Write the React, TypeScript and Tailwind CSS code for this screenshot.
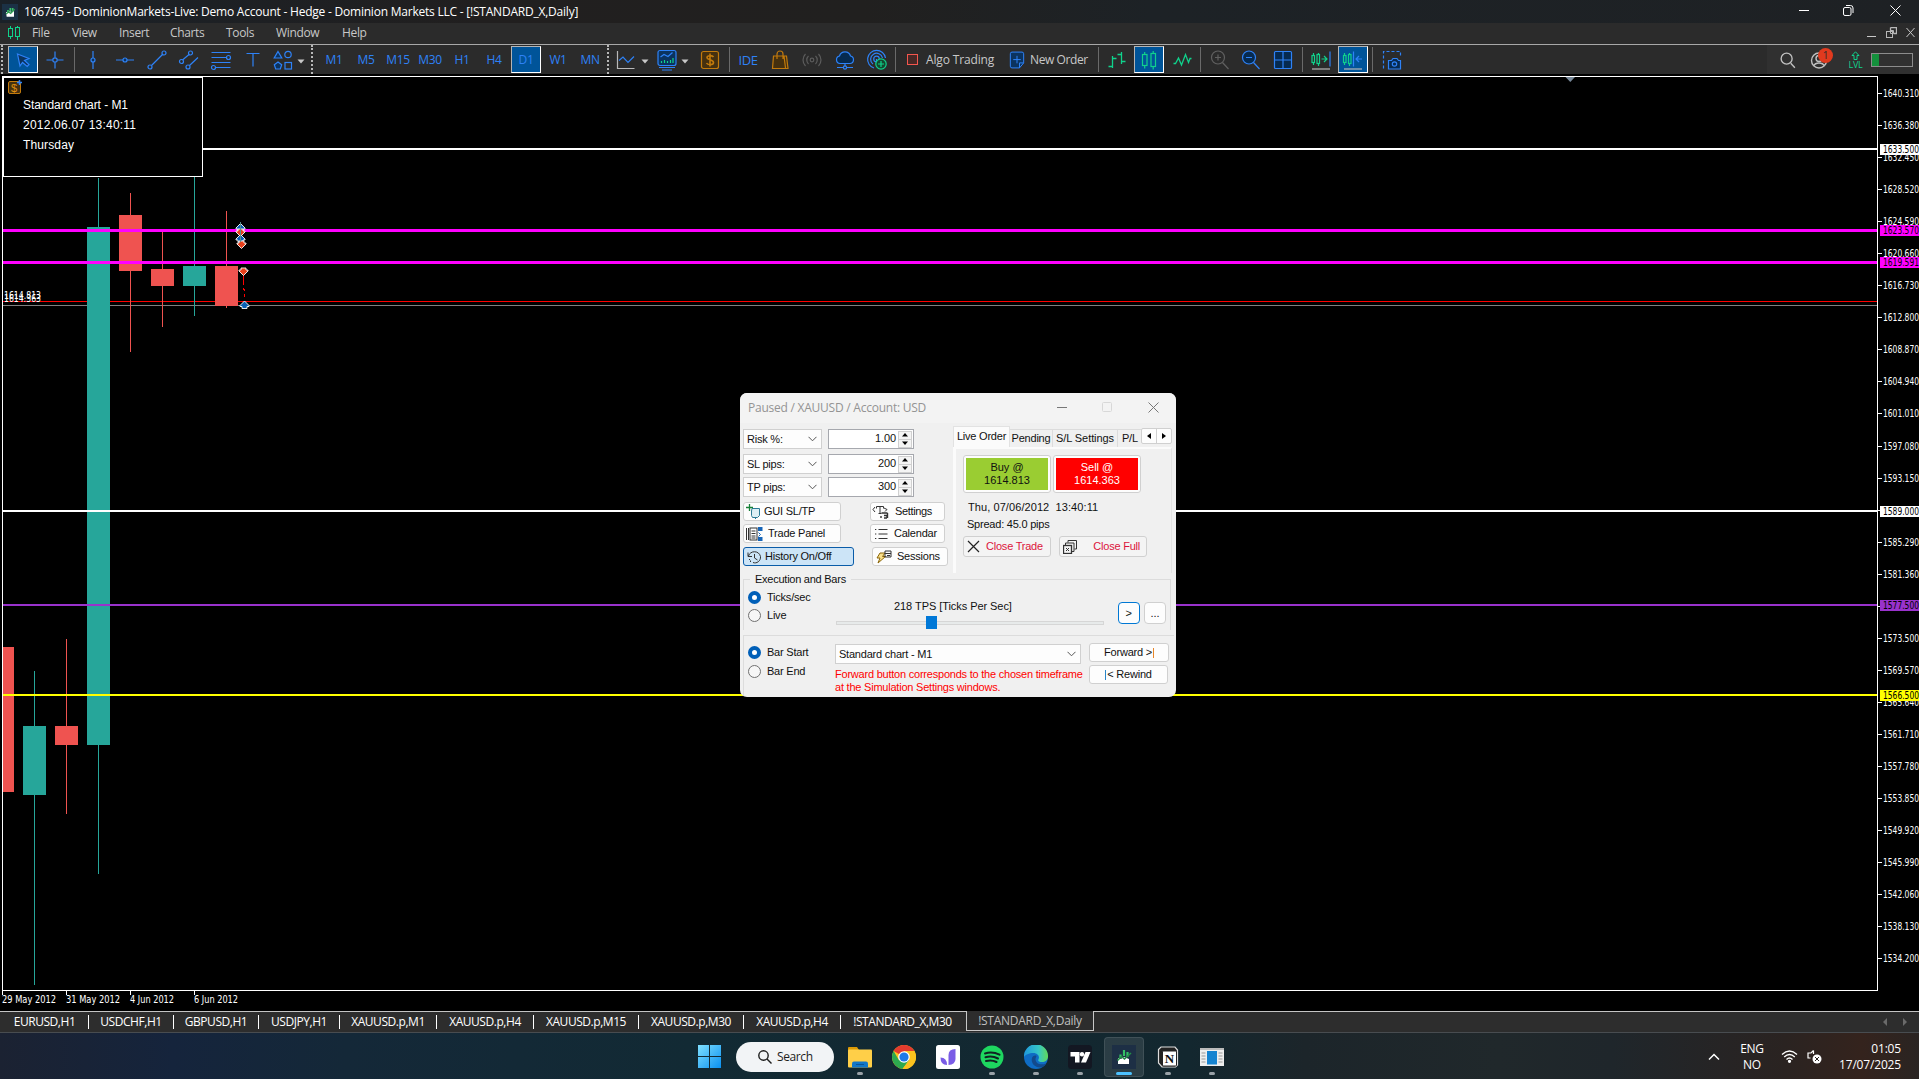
import React from 'react';
import clsx from 'clsx';

const BLUE = '#2e82f7';
const GREEN = '#10d28c';

const menus = [
  { label: 'File', width: 'w-[40px]' },
  { label: 'View', width: 'w-[47px]' },
  { label: 'Insert', width: 'w-[51px]' },
  { label: 'Charts', width: 'w-[56px]' },
  { label: 'Tools', width: 'w-[50px]' },
  { label: 'Window', width: 'w-[66px]' },
  { label: 'Help', width: 'w-[50px]' },
];

const timeframes = ['M1', 'M5', 'M15', 'M30', 'H1', 'H4', 'D1', 'W1', 'MN'];

const chartTabs = [
  { label: 'EURUSD,H1', width: 'w-[88px]' },
  { label: 'USDCHF,H1', width: 'w-[85px]' },
  { label: 'GBPUSD,H1', width: 'w-[85px]' },
  { label: 'USDJPY,H1', width: 'w-[81px]' },
  { label: 'XAUUSD.p,M1', width: 'w-[97px]' },
  { label: 'XAUUSD.p,H4', width: 'w-[97px]' },
  { label: 'XAUUSD.p,M15', width: 'w-[105px]' },
  { label: 'XAUUSD.p,M30', width: 'w-[105px]' },
  { label: 'XAUUSD.p,H4', width: 'w-[97px]' },
];

const candles = [
  { x: 3, w: 11, wick: 0, high: 647, low: 792, top: 647, bottom: 792, up: false },
  { x: 23, w: 23, wick: 34, high: 671, low: 985, top: 726, bottom: 795, up: true },
  { x: 55, w: 23, wick: 66, high: 639, low: 814, top: 726, bottom: 745, up: false },
  { x: 87, w: 23, wick: 98, high: 178, low: 874, top: 227, bottom: 745, up: true },
  { x: 119, w: 23, wick: 130, high: 193, low: 352, top: 215, bottom: 271, up: false },
  { x: 151, w: 23, wick: 162, high: 232, low: 327, top: 269, bottom: 286, up: false },
  { x: 183, w: 23, wick: 194, high: 177, low: 316, top: 266, bottom: 286, up: true },
  { x: 215, w: 23, wick: 226, high: 211, low: 308, top: 266, bottom: 306, up: false },
];

const levels = [
  { y: 148, h: 2, tag: 144, price: '1633.500', color: '#ffffff' },
  { y: 229, h: 3, tag: 225, price: '1623.570', color: '#ff00ff' },
  { y: 261, h: 3, tag: 257, price: '1619.591', color: '#ff00ff' },
  { y: 510, h: 2, tag: 506, price: '1589.000', color: '#ffffff' },
  { y: 604, h: 2, tag: 600, price: '1577.500', color: '#9932cc' },
  { y: 694, h: 2, tag: 690, price: '1566.500', color: '#ffff00' },
];

const prices: [number, string][] = [
  [93, '1640.310'], [125, '1636.380'], [157, '1632.450'], [189, '1628.520'], [221, '1624.590'],
  [253, '1620.660'], [285, '1616.730'], [317, '1612.800'], [349, '1608.870'], [381, '1604.940'],
  [413, '1601.010'], [446, '1597.080'], [478, '1593.150'], [510, ''], [542, '1585.290'],
  [574, '1581.360'], [606, ''], [638, '1573.500'], [670, '1569.570'], [702, '1565.640'],
  [734, '1561.710'], [766, '1557.780'], [798, '1553.850'], [830, '1549.920'], [862, '1545.990'],
  [894, '1542.060'], [926, '1538.130'], [958, '1534.200'],
];

const dates = [
  { x: 2, label: '29 May 2012', len: 54 },
  { x: 66, label: '31 May 2012', len: 54 },
  { x: 130, label: '4 Jun 2012', len: 44 },
  { x: 194, label: '6 Jun 2012', len: 44 },
];

function Icon({ children, color = BLUE, size = 24 }: { children: React.ReactNode; color?: string; size?: number }) {
  return (
    <svg width={size} height={size} viewBox="0 0 24 24" fill="none" stroke={color} strokeWidth="1.2" className="shrink-0">
      {children}
    </svg>
  );
}

function Cell({ children, width = 'w-8', active = false }: { children?: React.ReactNode; width?: string; active?: boolean }) {
  return (
    <div
      className={clsx(
        'flex h-[27px] shrink-0 items-center justify-center',
        width,
        active && 'border border-t-[#b4b4b4] border-l-[#b4b4b4] border-r-white border-b-white bg-[#005499]'
      )}
    >
      {children}
    </div>
  );
}

function Grip({ width }: { width: string }) {
  return (
    <div className={clsx('flex h-[29px] shrink-0 justify-center', width)}>
      <div className="w-0 border-l-2 border-dotted border-[#b8b8b8]" />
    </div>
  );
}

function Sep({ width }: { width: string }) {
  return (
    <div className={clsx('flex h-[25px] shrink-0 justify-center', width)}>
      <div className="w-px bg-[#6a6a6a]" />
    </div>
  );
}

function Caret({ className }: { className?: string }) {
  return (
    <svg width="8" height="5" viewBox="0 0 8 5" className={clsx('mt-[3px] shrink-0', className)}>
      <path d="M0.5 0.5h7L4 4.5z" fill="#c8c8c8" />
    </svg>
  );
}

function TitleBar() {
  return (
    <div className="flex h-[23px] items-center bg-[linear-gradient(90deg,#1a2128,#211f1f_25%,#21201f_45%,#1d2226_60%,#1e2124)] pl-[2px] text-white">
      <svg width="16" height="16" viewBox="0 0 24 24">
        <rect width="24" height="24" fill="#1b3145" />
        <path d="M6 12h3l3-1 3 1 3-2v9H7z" fill="#fff" />
        <path d="M9 13V9M12.500 11V6M16 11V6" stroke="#3cc46e" strokeWidth="2.500" />
        <path d="M6 15l4-3 3 2 6-6" stroke="#2d9a52" strokeWidth="2" fill="none" />
      </svg>
      <span className="ml-[6px] text-[12px] leading-[18px] tracking-[-0.22px] whitespace-nowrap">
        106745 - DominionMarkets-Live: Demo Account - Hedge - Dominion Markets LLC - [!STANDARD_X,Daily]
      </span>
      <div className="ml-auto flex items-center pr-[18px] pb-[3px]">
        <svg width="10" height="10" viewBox="0 0 10 10" stroke="#fff"><path d="M0 5.500h10" /></svg>
        <svg width="11" height="11" viewBox="0 0 11 11" stroke="#fff" fill="none" className="ml-[34px]">
          <rect x="0.500" y="2.500" width="7.500" height="8" rx="1.500" />
          <path d="M3 0.500h4.500a2.500 2.500 0 0 1 2.500 2.500v5" />
        </svg>
        <svg width="11" height="11" viewBox="0 0 11 11" stroke="#fff" className="ml-[36px]"><path d="M0.500 0.500l10 10M10.500 0.500l-10 10" /></svg>
      </div>
    </div>
  );
}

function MenuBar() {
  return (
    <div className="flex h-[21px] items-center bg-[#2b2b2b] pb-[2px] pl-[8px] text-[12px] leading-[18px] tracking-[-0.35px] text-[#c8c8c8]">
      <svg width="12" height="14" viewBox="0 0 12 14" stroke={GREEN} fill="none" className="mr-[12px]">
        <path d="M2.500 0v2.500M2.500 10v3M9.500 0v1.500M9.500 10.500v3.500" />
        <rect x="0.500" y="2.500" width="4" height="8" />
        <rect x="7.500" y="1.500" width="4" height="9" />
      </svg>
      {menus.map((m) => (
        <span key={m.label} className={m.width}>{m.label}</span>
      ))}
      <div className="ml-auto flex items-center pr-[4px]">
        <svg width="9" height="10" viewBox="0 0 9 10" stroke="#c8c8c8"><path d="M0 8.500h9" /></svg>
        <svg width="11" height="11" viewBox="0 0 11 11" stroke="#b8b8b8" fill="none" className="ml-[10px]">
          <path d="M4.500 0.500h6v6h-3M4.500 0.500v4" strokeWidth="1.300" />
          <rect x="0.500" y="4.500" width="6" height="6" />
          <path d="M4.500 6.500h3v-3h-3z" />
        </svg>
        <svg width="9" height="9" viewBox="0 0 9 9" stroke="#c8c8c8" className="ml-[9px]"><path d="M0.500 0l8 9M8.500 0l-8 9" /></svg>
      </div>
    </div>
  );
}

function Toolbar() {
  return (
    <div className="flex h-[30px] items-center border-t border-[#a8a8a8] bg-[#2b2b2b] text-[12px] leading-[18px] tracking-[-0.4px]">
      <div className="w-[1px] shrink-0" />
      <Grip width="w-[2px]" />
      <div className="w-[5px] shrink-0" />
      <Cell width="w-[30px]" active>
        <Icon><path d="M6.500 6l11.500 4.500-4.500 2 4.500 4-1.800 2-4.700-4-2.500 3.500z" fill="#0b335f" /></Icon>
      </Cell>
      <Cell width="w-[34px]">
        <Icon><path d="M12 3.500v6M12 14.500v6M3.500 12h6M14.500 12h6" /><circle cx="12" cy="12" r="2.200" /></Icon>
      </Cell>
      <Sep width="w-[5px]" />
      <Cell><Icon><path d="M12 3v7M12 14v7" /><circle cx="12" cy="12" r="2" fill="#0b335f" /></Icon></Cell>
      <Cell><Icon><path d="M3 12h7M14 12h7" /><circle cx="12" cy="12" r="2" fill="#0b335f" /></Icon></Cell>
      <Cell><Icon><path d="M6.500 17.500l11-11" /><circle cx="5" cy="19" r="2" /><circle cx="19" cy="5" r="2" /></Icon></Cell>
      <Cell><Icon><path d="M5.500 12l6.500-5.500M12.500 17.500l8.500-8" /><circle cx="4.500" cy="13.500" r="2" /><circle cx="13.500" cy="5" r="2" /><circle cx="11" cy="19" r="2" /></Icon></Cell>
      <Cell><Icon><path d="M2.500 4.500h19M2.500 9.500h15M2.500 14.500h19M6.500 19.500h15" /><circle cx="19.500" cy="9.500" r="2" /><circle cx="4.500" cy="19.500" r="2" /></Icon></Cell>
      <Cell><Icon><path d="M5.500 5.500h13M12 5.500v13" /></Icon></Cell>
      <Cell width="w-[28px]">
        <Icon>
          <path d="M7 3.500l3.800 6.500H3.200z" fill="#0b335f" /><circle cx="17" cy="6.500" r="3.200" />
          <path d="M7 14l3.700 2.700-1.400 4.300H4.700l-1.400-4.300z" fill="#0b335f" /><rect x="14" y="14.500" width="6.500" height="6.500" />
        </Icon>
      </Cell>
      <div className="flex w-[9px] shrink-0"><Caret /></div>
      <Grip width="w-[12px]" />
      {timeframes.map((t) => (
        <Cell key={t} width={t === 'D1' ? 'w-[30px] mx-px' : 'w-8'} active={t === 'D1'}>
          <span className="text-[#2e82f7]">{t}</span>
        </Cell>
      ))}
      <Grip width="w-[3px]" />
      <Cell width="w-[34px]">
        <Icon><path d="M3.500 3v17.500h17" stroke="#b8b8b8" /><path d="M5 12.500l4-3.500 5 5.500 6-6" /></Icon>
      </Cell>
      <Caret className="-ml-[2px]" />
      <Cell width="w-[36px]">
        <Icon>
          <rect x="3" y="2.500" width="18" height="15" rx="2" fill="#0b335f" />
          <path d="M5.500 9l3.500-2.500 4 2 4.500-4" /><path d="M4 19.500h16M7 22h10" />
          <path d="M6.500 15v-2M9.500 15v-3M12.500 15v-2M15.500 15v-3M18 15v-5" stroke={GREEN} />
        </Icon>
      </Cell>
      <Caret className="-ml-[4px]" />
      <Cell width="w-[42px]">
        <Icon color="#c27a0c">
          <rect x="3.500" y="3.500" width="17" height="17" rx="2" fill="#45300f" />
          <path d="M15.500 9c-1-1.700-6.500-2-6.500.5S15.500 11.500 15.500 14.500 9.500 17 8.500 15M12 5.500v13" strokeWidth="1.600" />
        </Icon>
      </Cell>
      <Sep width="w-px -ml-[2px]" />
      <Cell width="w-[36px]"><span className="text-[13px] tracking-[-0.500px] text-[#2e82f7]">IDE</span></Cell>
      <Cell width="w-[28px]">
        <Icon color="#c27a0c">
          <path d="M5.500 8h13l1.500 12.500H4.500z" fill="#45300f" /><path d="M9 11V6a3 3 0 0 1 6 0v5M16 8l1.500 12" />
        </Icon>
      </Cell>
      <Cell width="w-[36px]">
        <Icon color="#5c5c5c">
          <circle cx="12" cy="12" r="1.800" /><path d="M8.500 8a5.500 5.500 0 0 0 0 8M15.500 8a5.500 5.500 0 0 1 0 8M5.500 6a8.500 8.500 0 0 0 0 12M18.500 6a8.500 8.500 0 0 1 0 12" />
        </Icon>
      </Cell>
      <Cell width="w-[30px]">
        <Icon>
          <path d="M7 15.500a3.800 3.800 0 0 1-.5-7.500 5.700 5.700 0 0 1 11 0 3.800 3.800 0 0 1-.5 7.500z" fill="#062a50" />
          <path d="M12 15.500v3M4 19.500h6M14 19.500h6" /><circle cx="12" cy="19.500" r="1.600" />
        </Icon>
      </Cell>
      <Cell width="w-[34px]">
        <Icon>
          <path d="M9 20A9 9 0 1 1 20.500 10M8 16a6 6 0 1 1 9.500-6" /><circle cx="11.500" cy="11" r="2.800" />
          <path d="M11.500 11v6" />
          <circle cx="16" cy="16" r="5.200" fill="#12492f" stroke={GREEN} /><path d="M16 13v6M13 16h6" stroke={GREEN} />
        </Icon>
      </Cell>
      <Sep width="w-[3px]" />
      <div className="flex w-[200px] shrink-0 items-center text-[#c8c8c8]">
        <div className="ml-[10px] h-[11px] w-[11px] border border-[#f4564e] bg-[#472826]" />
        <span className="ml-[8px] w-[81px] tracking-[-0.150px]">Algo Trading</span>
        <Icon size={20}>
          <path d="M6 2.500h12q2 0 2 2v11l-5 6H6q-2 0-2-2v-15q0-2 2-2z" fill="#0b335f" /><path d="M12 7v9M7.500 11.500h9M15 21.500v-6h5" />
        </Icon>
        <span className="ml-[3px]">New Order</span>
      </div>
      <Sep width="w-[3px]" />
      <Cell width="w-[34px]">
        <Icon color={GREEN}><path d="M7.500 8v12M3.500 18.500h4M7.500 10.500h4M16.500 4v12M12.500 6.500h4M16.500 13.500h4" strokeWidth="1.300" /></Icon>
      </Cell>
      <Cell width="w-[30px]" active>
        <Icon color={GREEN}>
          <rect x="5.500" y="6.500" width="4.500" height="11" /><rect x="14" y="5.500" width="4.500" height="13" />
          <path d="M7.700 4v2.500M7.700 17.500v3M16.200 3v2.500M16.200 18.500v3" />
        </Icon>
      </Cell>
      <Cell width="w-[35px]">
        <Icon color={GREEN}><path d="M3.500 15.500h2l3-5.500 3 7 4-10.500 3 8 1.500-4h1.500" strokeWidth="1.300" /></Icon>
      </Cell>
      <Sep width="w-[3px]" />
      <Cell width="w-[35px]">
        <Icon color="#606060"><circle cx="10" cy="9.500" r="6.500" /><path d="M14.500 14.500l6 6.500M10 6.500v6M7 9.500h6" /></Icon>
      </Cell>
      <Cell width="w-[28px]">
        <Icon><circle cx="10" cy="9.500" r="6.500" fill="#062a50" /><path d="M14.500 14.500l6 6.500M7 9.500h6" /></Icon>
      </Cell>
      <Cell width="w-[36px]">
        <Icon><rect x="3.500" y="3.500" width="17" height="17" rx="1" fill="#062a50" /><path d="M12 3.500v17M3.500 12h17" /></Icon>
      </Cell>
      <Sep width="w-[3px]" />
      <Cell width="w-[34px]">
        <Icon>
          <path d="M4.500 5v3M4.500 14v3M9.500 5v2M9.500 15v3M12.500 11h5M15 8l3 3-3 3" stroke={GREEN} />
          <rect x="3" y="7.500" width="2.500" height="7" stroke={GREEN} /><rect x="8" y="6.500" width="2.500" height="9" stroke={GREEN} />
          <path d="M21 3.500v15" /><path d="M3 21h18" stroke="#b8b8b8" />
        </Icon>
      </Cell>
      <Cell width="w-[30px]" active>
        <Icon>
          <path d="M3.500 5v3M3.500 14v3M8.500 5v2M8.500 15v3" stroke={GREEN} />
          <rect x="2.500" y="7.500" width="2.500" height="7" stroke={GREEN} /><rect x="7.500" y="6.500" width="2.500" height="9" stroke={GREEN} />
          <path d="M12.500 3.500v15M15 11h6M18 8l-3 3 3 3" /><path d="M3 21h18" stroke="#b8b8b8" />
        </Icon>
      </Cell>
      <Sep width="w-[9px]" />
      <Cell width="w-[29px]">
        <Icon>
          <path d="M3.500 20.500v-17h17v5" strokeDasharray="3 2" />
          <path d="M8.500 12.500h3l1.500-2h4l1.500 2h2v8.500h-12z" fill="#062a50" /><circle cx="14.500" cy="16" r="2.200" />
        </Icon>
      </Cell>
      <div className="ml-auto flex h-full items-center bg-[#303030] pr-[6px] pl-[10px]">
        <Icon color="#c0c0c0" size={22}><circle cx="10.500" cy="10.500" r="6" strokeWidth="1.500" /><path d="M15 15.500l4.500 5" strokeWidth="1.500" /></Icon>
        <div className="relative ml-[9px]">
          <Icon color="#c0c0c0">
            <circle cx="11" cy="12.500" r="7.500" strokeWidth="1.400" /><circle cx="11" cy="10.500" r="3" strokeWidth="1.400" /><path d="M5.500 18c2-4 9-4 11 0" strokeWidth="1.400" />
          </Icon>
          <div className="absolute top-0 left-[10px] flex h-[15px] w-[15px] items-center justify-center rounded-full bg-[#e03a1e] text-[10px] text-[#2b2b2b]">1</div>
        </div>
        <div className="ml-[15px] flex w-[17px] flex-col items-center">
          <svg width="9" height="9" viewBox="0 0 9 9" fill="none" stroke={GREEN}><path d="M4.500 0.800l3.500 3.700H6v4H3v-4H1z" /></svg>
          <span className="text-[9px] leading-[9px] tracking-[-0.300px] text-[#10d28c]">LVL</span>
        </div>
        <div className="ml-[7px] h-[14px] w-[42px] border border-[#8c8c8c]">
          <div className="h-full w-[7px] bg-[#14913c]" />
        </div>
      </div>
    </div>
  );
}

function AxisText({ x, y, children, fill = '#fff', len = 36 }: { x: number; y: number; children: string; fill?: string; len?: number }) {
  return (
    <text x={x} y={y} fill={fill} fontSize="10.500" textLength={len} lengthAdjust="spacingAndGlyphs" fontFamily="'DejaVu Sans Condensed', 'DejaVu Sans', sans-serif">
      {children}
    </text>
  );
}

function TradeArrow({ x, y, up = false }: { x: number; y: number; up?: boolean }) {
  return (
    <path
      transform={`translate(${x} ${y}) scale(1 ${up ? 1 : -1})`}
      d="M0 -4L4.500 0.500V1.500H2.500V3.500H-2.500V1.500H-4.500V0.500Z"
      fill={up ? '#0a5fb4' : '#e8401c'}
      stroke="#fff"
      strokeWidth="0.900"
    />
  );
}

function PriceChart() {
  return (
    <svg viewBox="0 76 1919 935" className="h-[935px] w-full shrink-0 bg-black">
      <g shapeRendering="crispEdges">
        <rect x="3" y="301" width="1874" height="1" fill="#ff0000" />
        <rect x="3" y="305" width="1874" height="1" fill="#808080" />
        {candles.map((c) => (
          <g key={c.x} fill={c.up ? '#26a69a' : '#ef5350'}>
            {c.wick > 0 && <rect x={c.wick} y={c.high} width="1" height={c.low - c.high} />}
            <rect x={c.x} y={c.top} width={c.w} height={c.bottom - c.top} />
          </g>
        ))}
        {levels.map((l) => (
          <rect key={l.y} x="3" y={l.y} width="1874" height={l.h} fill={l.color} />
        ))}
        <rect x="2.500" y="76.500" width="1875" height="914" fill="none" stroke="#fff" />
        {prices.map(([y]) => <rect key={y} x="1878" y={y} width="4" height="1" fill="#fff" />)}
        {dates.map((d) => <rect key={d.x} x={d.x} y="991" width="1" height="4" fill="#fff" />)}
      </g>
      <path d="M1565.500 77h9.500l-4.700 5z" fill="#778899" />

      {prices.map(([y, p]) => p && <AxisText key={y} x={1883} y={y + 4}>{p}</AxisText>)}
      {levels.map((l) => (
        <g key={l.price}>
          <rect x="1880" y={l.tag} width="39" height="11" fill={l.color} />
          <AxisText x={1883} y={l.tag + 9} fill="#000">{l.price}</AxisText>
        </g>
      ))}
      {dates.map((d) => <AxisText key={d.x} x={d.x} y={1003} len={d.len}>{d.label}</AxisText>)}
      <AxisText x={4} y={298.500} len={37}>1614.813</AxisText>
      <AxisText x={4} y={302} len={37}>1614.363</AxisText>

      <path d="M243.500 275v10M243.500 288v2M244.500 289v2M244.500 294v3" stroke="#ff0000" />
      <TradeArrow x={240.500} y={227.500} up />
      <TradeArrow x={240.500} y={232.500} />
      <TradeArrow x={240.500} y={238.500} up />
      <TradeArrow x={241.500} y={244.500} />
      <path d="M240.500 222v20" stroke="#5d8f8b" />
      <TradeArrow x={243.500} y={271.500} />
      <TradeArrow x={244.500} y={305} up />

      <rect x="3.500" y="77.500" width="199" height="99" fill="#000" stroke="#fff" shapeRendering="crispEdges" />
      <rect x="8.500" y="81.500" width="12" height="12" rx="1.500" fill="#45300f" stroke="#c27a0c" />
      <text x="11" y="91.500" fill="#e0900f" fontSize="11" fontFamily="'Liberation Sans', sans-serif">$</text>
      <path d="M19.500 80v5M17 82.500h5" stroke={BLUE} strokeWidth="1.500" />
      <g fill="#fff" fontSize="12" fontFamily="'Liberation Sans', Arial, sans-serif">
        <text x="23" y="109" textLength="105">Standard chart - M1</text>
        <text x="23" y="129" textLength="113">2012.06.07 13:40:11</text>
        <text x="23" y="149" textLength="51">Thursday</text>
      </g>
    </svg>
  );
}

function Select({ label, className }: { label: string; className: string }) {
  return (
    <div className={clsx('flex h-5 items-center justify-between border border-[#d0d0d0] bg-[#fdfdfd] pr-[4px] pl-[3px]', className)}>
      <span>{label}</span>
      <svg width="9" height="6" viewBox="0 0 9 6" fill="none" stroke="#555"><path d="M0.500 0.800l4 4 4-4" /></svg>
    </div>
  );
}

function Spinner({ value }: { value: string }) {
  return (
    <div className="ml-[6px] flex h-5 w-[86px] items-center justify-end border border-[#a6a8ae] bg-white pr-px">
      <span className="mr-[2px] pb-px tracking-[-0.100px]">{value}</span>
      <div className="flex h-[17px] w-[14px] flex-col border border-[#d0d0d0] bg-[#f4f4f4]">
        <div className="flex flex-1 items-center justify-center border-b border-[#d0d0d0]">
          <svg width="6" height="4" viewBox="0 0 6 4"><path d="M0 3.500h6L3 0z" /></svg>
        </div>
        <div className="flex flex-1 items-center justify-center">
          <svg width="6" height="4" viewBox="0 0 6 4"><path d="M0 0.500h6L3 4z" /></svg>
        </div>
      </div>
    </div>
  );
}

function Btn({ children, className }: { children: React.ReactNode; className: string }) {
  return (
    <div className={clsx('flex h-[19px] shrink-0 items-center rounded-[3px] border', className)}>{children}</div>
  );
}

const plain = 'border-[#d0d0d0] bg-[#fdfdfd]';

function Radio({ label, checked = false }: { label: string; checked?: boolean }) {
  return (
    <div className="flex h-[18px] items-center">
      <span className={clsx('h-[13px] w-[13px] rounded-full', checked ? 'border-[4px] border-[#005fb8] bg-white' : 'border border-[#707070] bg-[#f6f6f6]')} />
      <span className="ml-[6px]">{label}</span>
    </div>
  );
}

function TradePanel() {
  return (
    <div className="absolute top-[393px] left-[740px] flex h-[304px] w-[436px] flex-col overflow-hidden rounded-[7px] bg-[#f0f0f0] font-['Liberation_Sans',Arial,sans-serif] text-[11px] leading-[13px] tracking-[-0.220px] whitespace-nowrap text-[#111]">
      <div className="flex h-[30px] shrink-0 items-center bg-[#f3f3f3] pr-[17px] pl-[8px]">
        <span className="font-['Open_Sans','Noto_Sans',sans-serif] text-[12px] leading-[18px] tracking-[-0.240px] text-[#949494]">Paused / XAUUSD / Account: USD</span>
        <svg width="10" height="10" viewBox="0 0 10 10" stroke="#777" className="mb-[2px] ml-auto"><path d="M0 5.500h10" /></svg>
        <svg width="10" height="10" viewBox="0 0 10 10" stroke="#d8d8d8" fill="none" className="mb-[2px] ml-[35px]"><rect x="0.500" y="0.500" width="9" height="9" rx="1" /></svg>
        <svg width="11" height="11" viewBox="0 0 11 11" stroke="#777" className="mb-[2px] ml-[36px]"><path d="M0.500 0.500l10 10M10.500 0.500l-10 10" /></svg>
      </div>

      <div className="flex h-[150px] shrink-0">
        <div className="w-[213px] pt-[6px] pl-[3px]">
          <div className="flex"><Select label="Risk %:" className="w-[79px]" /><Spinner value="1.00" /></div>
          <div className="mt-[5px] flex"><Select label="SL pips:" className="w-[79px]" /><Spinner value="200" /></div>
          <div className="mt-[3px] flex"><Select label="TP pips:" className="w-[79px]" /><Spinner value="300" /></div>
          <div className="mt-[5px] flex">
            <Btn className={clsx('w-[98px]', plain)}>
              <svg width="16" height="15" viewBox="0 0 16 15" fill="none" className="ml-[2px]">
                <path d="M6 4.500h7.500v7l-2 2h-5l-1-2V7z" stroke="#2a7a96" fill="#dceff5" /><path d="M9.500 13v2" stroke="#2a7a96" /><path d="M0 3.500h7M3.500 0v7" stroke="#188038" strokeWidth="1.300" />
              </svg>
              <span className="ml-[2px]">GUI SL/TP</span>
            </Btn>
            <Btn className={clsx('ml-[29px] w-[75px]', plain)}>
              <svg width="18" height="14" viewBox="0 0 18 14" fill="none" stroke="#333" className="ml-[1px]">
                <path d="M3 2L1 4.500l2 2.500M4.500 1.500h7v2M4.500 1.500v2M8 1.500V8M6.500 8.500h3M12 3l3 1.500-2 2" /><path d="M9 13v-2M15.500 8H9.500M15.500 8v5M12 13h3M12 10.500h3v2" strokeWidth="1.400" />
              </svg>
              <span className="ml-[5px] tracking-[-0.350px]">Settings</span>
            </Btn>
          </div>
          <div className="mt-[3px] flex">
            <Btn className={clsx('w-[98px]', plain)}>
              <svg width="17" height="14" viewBox="0 0 17 14" className="ml-[2px]">
                <path d="M0.500 1v12M2.500 1v12" stroke="#333" /><rect x="4" y="1" width="7" height="12" fill="#fff" stroke="#333" /><path d="M5.500 4h4M5.500 6.500h4M5.500 9h4M5.500 11h4" stroke="#333" />
                <path d="M12 0h4.500v4H12zM12 10h4.500v4H12z" fill="#1765b8" /><path d="M12.500 5.500l2 2-2 2" stroke="#1765b8" fill="none" />
              </svg>
              <span className="ml-[5px]">Trade Panel</span>
            </Btn>
            <Btn className={clsx('ml-[29px] w-[75px]', plain)}>
              <svg width="13" height="12" viewBox="0 0 13 12" stroke="#333" className="ml-[4px]">
                <path d="M3.500 1.500h9M3.500 6h9M3.500 10.500h9" /><path d="M0 1.500h1.300M0 6h1.300M0 10.500h1.300" />
              </svg>
              <span className="ml-[6px]">Calendar</span>
            </Btn>
          </div>
          <div className="mt-1 flex">
            <Btn className="w-[111px] border-[#0a5ca8] bg-[#cce4f7]">
              <svg width="15" height="14" viewBox="0 0 15 14" fill="none" stroke="#333" className="ml-[3px]">
                <path d="M1 2.500v4h4M1.500 6C3 0.500 12 0 13.500 6.500 14 11 9.500 14 6 12.500" /><path d="M7.500 4v4l3 2M2 9l1.500 1.500M4 12l-1-1" />
              </svg>
              <span className="ml-[3px]">History On/Off</span>
            </Btn>
            <Btn className={clsx('ml-[18px] w-[76px]', plain)}>
              <svg width="16" height="14" viewBox="0 0 16 14" fill="none" className="ml-[3px]">
                <path d="M4 3h5L6.500 6.500h3L2 13l2-5H1z" fill="#fbe08a" stroke="#8a6508" /><path d="M9 1h6v6H9zM9 3.500h6M11 5.500h3" stroke="#333" />
              </svg>
              <span className="ml-[5px]">Sessions</span>
            </Btn>
          </div>
        </div>

        <div className="flex w-[219px] flex-col pt-[3px]">
          <div className="flex h-[21px] items-end">
            <div className="flex h-[21px] w-[57px] items-center justify-center border border-b-0 border-[#e2e2e2] bg-[#fbfbfb] pb-[2px]">Live Order</div>
            <div className="flex h-[18px] w-[43px] items-center justify-center border-r border-t border-[#dcdcdc]">Pending</div>
            <div className="flex h-[18px] w-[65px] items-center justify-center border-r border-t border-[#dcdcdc] tracking-[-0.080px]">S/L Settings</div>
            <div className="flex h-[18px] w-[23px] items-center overflow-hidden border-t border-[#dcdcdc] pl-[4px]">P/L</div>
            <div className="mb-[3px] flex h-4 w-[31px] rounded-[2px] border border-[#d0d0d0] bg-[#fdfdfd]">
              <div className="flex flex-1 items-center justify-center border-r border-[#d0d0d0]"><svg width="4" height="6" viewBox="0 0 4 6"><path d="M4 0v6L0 3z" /></svg></div>
              <div className="flex flex-1 items-center justify-center"><svg width="4" height="6" viewBox="0 0 4 6"><path d="M0 0v6l4-3z" /></svg></div>
            </div>
          </div>
          <div className="flex-1 border-t-2 border-r border-l-[3px] border-t-[#fbfbfb] border-r-[#e2e2e2] border-l-[#fbfbfb] pt-[6px] pl-[7px]">
            <div className="flex gap-[2px] text-center tracking-normal">
              <div className="h-[38px] w-[88px] rounded-[3px] border border-[#d0d0d0] bg-[#fdfdfd] p-[2px]">
                <div className="h-full bg-[#9acd32] pt-[3px]">Buy @<br />1614.813</div>
              </div>
              <div className="h-[38px] w-[88px] rounded-[3px] border border-[#d0d0d0] bg-[#fdfdfd] p-[2px]">
                <div className="h-full bg-[#ff0000] pt-[3px] text-white">Sell @<br />1614.363</div>
              </div>
            </div>
            <div className="mt-[8px] ml-[5px] tracking-[0.080px] whitespace-pre">{'Thu, 07/06/2012  13:40:11'}</div>
            <div className="mt-[4px] ml-[4px]">Spread: 45.0 pips</div>
            <div className="mt-[5px] flex text-[#dc143c]">
              <Btn className="h-[21px] w-[88px] border-[#d0d0d0] bg-[#f4f4f4]">
                <svg width="13" height="13" viewBox="0 0 13 13" stroke="#222" className="ml-[3px]"><path d="M1 1l11 11M12 1L1 12" strokeWidth="1.200" /></svg>
                <span className="ml-[6px]">Close Trade</span>
              </Btn>
              <Btn className="ml-[8px] h-[21px] w-[88px] border-[#d0d0d0] bg-[#f4f4f4]">
                <svg width="14" height="14" viewBox="0 0 14 14" fill="none" stroke="#333" className="ml-[3px]">
                  <rect x="0.500" y="5.500" width="8" height="8" strokeWidth="1.300" /><path d="M2.500 5V3h8.500v8.500H9M5 2.500v-2h8.500V9h-2M3 8l3 3M6 8l-3 3" />
                </svg>
                <span className="mr-[6px] ml-auto">Close Full</span>
              </Btn>
            </div>
          </div>
        </div>
      </div>

      <div className="mr-[5px] ml-[3px] flex h-[57px] shrink-0">
        <fieldset className="mt-0 flex h-[57px] w-full border border-b-0 border-[#dcdcdc] pl-[4px]">
          <legend className="ml-[2px] px-[5px] tracking-[-0.250px]">Execution and Bars</legend>
          <div className="w-[90px] pt-[2px]">
            <Radio label="Ticks/sec" checked />
            <Radio label="Live" />
          </div>
          <div className="-ml-[2px] w-[268px] shrink-0 pt-[14px]">
            <div className="ml-[58px] tracking-[-0.060px]">218 TPS [Ticks Per Sec]</div>
            <div className="mt-[3px] flex h-[13px] items-center">
              <div className="h-1 w-[90px] border border-r-0 border-[#d6d6d6] bg-[#e7eaea]" />
              <div className="h-[13px] w-[11px] bg-[#0078d7]" />
              <div className="h-1 w-[167px] border border-l-0 border-[#d6d6d6] bg-[#e7eaea]" />
            </div>
          </div>
          <div className="ml-[14px] flex gap-1 pt-[16px]">
            <div className="flex h-[22px] w-[22px] items-center justify-center rounded-[4px] border border-[#0078d4] bg-[#fdfdfd] pr-px">&gt;</div>
            <div className="flex h-[22px] w-[22px] items-center justify-center rounded-[4px] border border-[#d0d0d0] bg-[#fdfdfd] tracking-normal">...</div>
          </div>
        </fieldset>
      </div>

      <div className="mt-[5px] mr-[2px] ml-[3px] flex flex-1 border-t border-l border-[#dcdcdc] pl-[4px]">
        <div className="w-[87px] pt-[7px]">
          <Radio label="Bar Start" checked />
          <div className="h-px" />
          <Radio label="Bar End" />
        </div>
        <div className="w-[254px] pt-[8px]">
          <Select label="Standard chart - M1" className="w-[246px]" />
          <div className="mt-[4px] text-[#ff0000]">Forward button corresponds to the chosen timeframe<br />at the Simulation Settings windows.</div>
        </div>
        <div className="pt-[7px]">
          <Btn className={clsx('w-[80px] justify-center', plain)}>Forward &gt;<span className="ml-px h-[10px] w-px bg-[#e8862a]" /></Btn>
          <Btn className={clsx('mt-[3px] w-[79px] justify-center', plain)}><span className="mr-px h-[10px] w-px bg-[#2a86c8]" />&lt; Rewind</Btn>
        </div>
      </div>
    </div>
  );
}

function ChartTabs() {
  return (
    <div className="flex h-[22px] shrink-0 items-start border-t border-b border-t-[#c4c4c4] border-b-[#484c50] bg-[#2d2d2d] text-[12px] leading-[18px] tracking-[-0.450px] text-white">
      <div className="w-px" />
      {chartTabs.map((t, i) => (
        <div key={i} className={clsx('flex h-5 items-center', t.width)}>
          <span className="flex-1 text-center">{t.label}</span>
          <span className="h-[14px] w-px bg-white" />
        </div>
      ))}
      <div className="flex h-5 w-[125px] items-center justify-center pr-[2px]">!STANDARD_X,M30</div>
      <div className="-mt-px flex h-5 w-[128px] items-center justify-center border border-t-0 border-[#c8c8c8] bg-[#2d2d2d] tracking-[-0.260px] text-[#c0c0c0]">!STANDARD_X,Daily</div>
      <div className="ml-auto flex h-5 items-center gap-[16px] pr-[12px]">
        <svg width="4" height="8" viewBox="0 0 4 8"><path d="M4 0v8L0 4z" fill="#6a6a6a" /></svg>
        <svg width="4" height="8" viewBox="0 0 4 8"><path d="M0 0v8l4-4z" fill="#6a6a6a" /></svg>
      </div>
    </div>
  );
}

function TaskItem({ children, state }: { children: React.ReactNode; state?: 'open' | 'active' }) {
  return (
    <div className="relative flex h-full w-11 items-center justify-center">
      <div className={clsx('flex h-10 w-10 items-center justify-center rounded-[4px]', state === 'active' && 'border border-white/10 bg-white/10')}>
        <svg width="24" height="24" viewBox="0 0 24 24">{children}</svg>
      </div>
      {state === 'open' && <span className="absolute bottom-[4px] h-[3px] w-[6px] rounded-full bg-[#9aa2a8]" />}
      {state === 'active' && <span className="absolute bottom-[4px] h-[3px] w-4 rounded-full bg-[#4cc2ff]" />}
    </div>
  );
}

function Taskbar() {
  return (
    <div className="flex h-[46px] shrink-0 items-center bg-[linear-gradient(90deg,#1b2232,#15243c_9%,#142838_18%,#122a34_36%,#13272f_62%,#1c252a_68%,#20282b_78%,#1f262b_84%,#2a2321_93%,#34231d_97%,#2a2422)] pt-px pl-[698px] text-[12px] leading-4 text-white">
      <svg width="23" height="23" viewBox="0 0 23 23">
        <defs>
          <linearGradient id="win" x1="0" y1="0" x2="1" y2="1"><stop stopColor="#7fe0ff" /><stop offset="1" stopColor="#0a90f0" /></linearGradient>
        </defs>
        <path d="M0 0h11v11H0zM12 0h11v11H12zM0 12h11v11H0zM12 12h11v11H12z" fill="url(#win)" />
      </svg>
      <div className="ml-[15px] flex h-[30px] w-[98px] items-center rounded-full bg-[#f2f4f6] pl-[22px] text-[#1d1d1d]">
        <svg width="14" height="14" viewBox="0 0 14 14" fill="none" stroke="#1d1d1d" strokeWidth="1.400"><circle cx="5.500" cy="5.500" r="4.700" /><path d="M9 9l4.500 4.500" /></svg>
        <span className="ml-[5px] tracking-[-0.400px]">Search</span>
      </div>
      <div className="ml-[4px] flex h-full">
        <TaskItem state="open">
          <path d="M0 3q0-1 1-1h8l2 3v4H0z" fill="#dd9a06" /><rect y="4.500" width="24" height="18" rx="1" fill="#ffcf48" /><path d="M4 22.500v-4q0-2 2-2h12q2 0 2 2v4z" fill="#1477c8" /><path d="M8 19.500h8" stroke="#0c5596" />
        </TaskItem>
        <TaskItem>
          <circle cx="12" cy="12" r="12" fill="#fcc31e" />
          <path d="M12 12L1.600 6A12 12 0 0 1 22.400 6H12z" fill="#e33b2e" />
          <path d="M1.600 6A12 12 0 0 0 10.500 23.900L17.200 15 12 12 6.800 15z" fill="#2da94f" />
          <path d="M12 6h10.400a12 12 0 0 1-11.900 17.900L17.200 15z" fill="#fcc31e" />
          <circle cx="12" cy="12" r="5.800" fill="#fff" /><circle cx="12" cy="12" r="4.600" fill="#1f7ae8" />
        </TaskItem>
        <TaskItem>
          <rect width="24" height="24" rx="2.500" fill="#fff" />
          <path d="M12.500 10q0-6 7-6v10q0 5.500-7 6z" fill="#7a5ce6" /><path d="M4.500 12.500q6.500 0 6.500 7.500-6.500 0-6.500-7.500z" fill="#7a5ce6" />
        </TaskItem>
        <TaskItem state="open">
          <circle cx="12" cy="12" r="11.500" fill="#1ed760" />
          <path d="M5 8.500c5-1.500 10-1 14.500 1.200M5.500 12.300c4.500-1.300 8.500-.8 12.500 1.200M6 16c4-1 7.500-.6 10.500 1" stroke="#122" strokeWidth="2" fill="none" strokeLinecap="round" />
        </TaskItem>
        <TaskItem state="open">
          <defs>
            <linearGradient id="edgeA" x1="0" y1="0.300" x2="1" y2="0.300"><stop stopColor="#1f98dc" /><stop offset="0.600" stopColor="#35c6c8" /><stop offset="1" stopColor="#62d957" /></linearGradient>
          </defs>
          <circle cx="12" cy="12" r="12" fill="#0f6cc4" />
          <path d="M0 12a12 12 0 0 1 24-1.500c.3 4-2.500 6.500-6 6.500-3 0-4.500-1.200-3.500-2.800C16 11.500 13.500 8 9.500 8 5 8 1 10 0 12z" fill="url(#edgeA)" />
          <path d="M8 13c-1.500 5 3 9.500 8 9.500 3 0 5-2 6-4-5 2-10 .5-10.500-4C11.500 12.500 12.500 11.500 12.500 11 11 10 8.500 11 8 13z" fill="#124a8c" />
        </TaskItem>
        <TaskItem state="open">
          <rect width="24" height="24" rx="3.500" fill="#131722" />
          <path d="M2.500 7h9v10.500H7V11.500H2.500z" fill="#fff" /><circle cx="14" cy="9.200" r="2.200" fill="#fff" /><path d="M17.500 7h5l-4.500 10.500h-5z" fill="#fff" />
        </TaskItem>
        <TaskItem state="active">
          <rect width="24" height="24" fill="#1d2f45" />
          <path d="M6 13l3 1 3-2 5 2v5H6z" fill="#fff" /><path d="M8.500 13V9.500M12 11V5M15.500 12V7" stroke="#33c065" strokeWidth="2.200" /><path d="M5.500 15.500l4-4 3 2.500 6.500-6" stroke="#238c46" strokeWidth="1.600" fill="none" />
        </TaskItem>
        <TaskItem state="open">
          <path d="M2.500 4.500L5 2h14l2.500 3v15l-2 2H6l-3.500-4z" fill="#222" stroke="#ddd" strokeWidth="1.200" /><rect x="6.500" y="6" width="14" height="15" rx="1" fill="#fff" stroke="#222" />
          <text x="13.500" y="18" textAnchor="middle" fontSize="13" fontWeight="700" fill="#111" fontFamily="'Liberation Serif', serif">N</text>
        </TaskItem>
        <TaskItem state="open">
          <rect y="3" width="24" height="18" fill="#eee" /><path d="M0 4h24" stroke="#bbb" strokeWidth="2" /><rect x="7" y="6" width="10" height="13.500" fill="#1583d0" />
          <path d="M1.500 8h4M1.500 11h4M1.500 14h4M1.500 17h4M18.500 8h4M18.500 11h4M18.500 14h4M18.500 17h4" stroke="#999" />
        </TaskItem>
      </div>
      <div className="ml-auto flex items-center pr-[18px]">
        <svg width="12" height="8" viewBox="0 0 12 8" fill="none" stroke="#fff" strokeWidth="1.500"><path d="M1 6.500l5-5 5 5" /></svg>
        <div className="ml-[20px] w-[24px] text-center tracking-[-0.300px]">ENG<br />NO</div>
        <svg width="17" height="13" viewBox="0 0 17 13" fill="none" stroke="#fff" strokeWidth="1.300" className="ml-[17px]">
          <path d="M1 4.500q7.500-7 15 0M3.200 7q5.300-5 10.600 0M5.500 9.500q3-3 6 0" /><circle cx="8.500" cy="11.300" r="1" fill="#fff" />
        </svg>
        <svg width="15" height="15" viewBox="0 0 15 15" fill="none" stroke="#fff" className="ml-[9px]">
          <path d="M6.500 1.500L4 4H1v5h2.500M6.500 1.500V5" strokeWidth="1.200" /><circle cx="10" cy="10" r="4.500" fill="#fff" stroke="none" /><path d="M8 8l4 4M12 8l-4 4" stroke="#2a2321" />
        </svg>
        <div className="ml-[17px] text-right tracking-[-0.170px]">01:05<br />17/07/2025</div>
      </div>
    </div>
  );
}

export default function App() {
  return (
    <div className="relative flex h-[1079px] w-[1919px] flex-col overflow-hidden bg-black font-['Open_Sans','Noto_Sans',sans-serif]">
      <TitleBar />
      <MenuBar />
      <Toolbar />
      <div className="h-[2px] shrink-0" />
      <PriceChart />
      <ChartTabs />
      <Taskbar />
      <TradePanel />
    </div>
  );
}
